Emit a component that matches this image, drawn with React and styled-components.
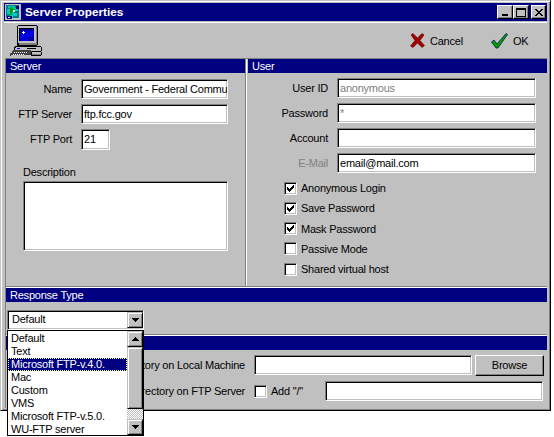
import React from 'react';
import styled, { createGlobalStyle } from 'styled-components';

const GlobalStyle = createGlobalStyle`
  html, body {
    margin: 0;
    padding: 0;
    background: #fff;
  }
  body {
    font-family: "Liberation Sans", Arial, sans-serif;
    font-size: 11px;
    letter-spacing: -0.22px;
    color: #000;
  }
`;

const Page = styled.div`
  width: 554px;
  height: 437px;
  overflow: hidden;
  position: relative;
`;

const Window = styled.div`
  width: 551px;
  height: 411px;
  box-sizing: border-box;
  background: #c0c0c0;
  border: 1px solid;
  border-color: #c0c0c0 #000 #000 #c0c0c0;
  box-shadow: inset 1px 1px #fff, inset -1px -1px #808080;
  padding: 2px 3px 2px 3px;
  display: flex;
  flex-direction: column;
`;

const TitleBar = styled.div`
  height: 18px;
  flex: none;
  background: #000080;
  display: flex;
  align-items: center;
  padding: 0 1px 0 1px;
  color: #fff;
`;

const TitleText = styled.span`
  font-weight: bold;
  font-size: 11.8px;
  letter-spacing: 0;
  margin-left: 4px;
  flex: 1;
`;

const CaptionButton = styled.div`
  width: ${p => p.$width || 16}px;
  height: 14px;
  margin-left: ${p => p.$gap || 0}px;
  background: #c0c0c0;
  box-sizing: border-box;
  border: 1px solid;
  border-color: #fff #000 #000 #fff;
  box-shadow: inset -1px -1px #808080;
  display: flex;
  align-items: center;
  justify-content: center;
`;

const Toolbar = styled.div`
  height: 36px;
  flex: none;
  border-top: 1px solid #fff;
  margin-top: 1px;
  box-sizing: border-box;
  display: flex;
  align-items: center;
  padding: 0 0 0 6px;
`;

const ToolButton = styled.div`
  display: flex;
  align-items: center;
  gap: 5px;
  margin-left: ${p => p.$left}px;
`;

const Sections = styled.div`
  flex: 1;
  display: flex;
  flex-direction: column;
  border-left: 1px solid #808080;
  margin-left: 1px;
  min-height: 0;
`;

const SplitRow = styled.div`
  display: grid;
  grid-template-columns: 239px 1fr;
  height: 227px;
  flex: none;
  border-top: 1px solid #808080;
`;

const Column = styled.div`
  border-left: ${p => (p.$divided ? '1px solid #808080' : 'none')};
  box-shadow: ${p => (p.$divided ? 'inset 1px 0 #fff' : 'none')};
  padding-left: ${p => (p.$divided ? 2 : 0)}px;
`;

const Header = styled.div`
  height: 14px;
  line-height: 14px;
  background: #000080;
  color: #fff;
  padding-left: 4px;
`;

const Fields = styled.div`
  display: flex;
  flex-direction: column;
  gap: 5px;
  padding-top: ${p => p.$top}px;
`;

const Row = styled.div`
  display: flex;
  align-items: center;
  height: 20px;
`;

const Label = styled.label`
  width: ${p => p.$width}px;
  flex: none;
  text-align: right;
  margin-right: 9px;
  white-space: nowrap;
  color: ${p => (p.$disabled ? '#808080' : '#000')};
`;

const Sunken = styled.div`
  box-sizing: border-box;
  flex: none;
  width: ${p => p.$width}px;
  height: ${p => p.$height || 20}px;
  background: #fff;
  border: 1px solid;
  border-color: #808080 #fff #fff #808080;
  box-shadow: inset 1px 1px #000, inset -1px -1px #c0c0c0;
  padding: 2px;
  line-height: 15px;
  white-space: nowrap;
  overflow: hidden;
  color: ${p => (p.$muted ? '#808080' : '#000')};
`;

const Description = styled.div`
  padding: 16px 0 0 17px;
`;

const DescriptionLabel = styled.div`
  height: 16px;
  line-height: 14px;
`;

const Checks = styled.div`
  display: flex;
  flex-direction: column;
  padding: 5px 0 0 36px;
`;

const CheckRow = styled.div`
  display: flex;
  align-items: center;
  height: 20.25px;
  gap: 4px;
`;

const Box = styled.div`
  box-sizing: border-box;
  width: 13px;
  height: 13px;
  flex: none;
  background: #fff;
  border: 1px solid;
  border-color: #808080 #fff #fff #808080;
  box-shadow: inset 1px 1px #000, inset -1px -1px #c0c0c0;
  display: flex;
  align-items: center;
  justify-content: center;
`;

const Section = styled.div`
  border-top: 1px solid #808080;
  box-shadow: inset 0 1px #fff;
  padding-top: 1px;
  flex: none;
`;

const ResponseBody = styled.div`
  height: 32px;
`;

const PathRows = styled.div`
  display: flex;
  flex-direction: column;
  gap: 6px;
  padding-top: 5px;
`;

const PathRow = styled.div`
  display: flex;
  align-items: center;
  height: 20px;
`;

const PathLabel = styled.span`
  width: 239px;
  flex: none;
  text-align: right;
  margin-right: 9px;
  white-space: nowrap;
`;

const AddSlash = styled.div`
  display: flex;
  align-items: center;
  gap: 4px;
  width: 71px;
  flex: none;
`;

const BrowseButton = styled.div`
  box-sizing: border-box;
  width: 69px;
  height: 21px;
  margin-left: 3px;
  flex: none;
  border: 1px solid;
  border-color: #fff #000 #000 #fff;
  box-shadow: inset -1px -1px #808080;
  text-align: center;
  line-height: 18px;
`;

/* the open combo lies over the sections below it */
const Combo = styled.div`
  position: absolute;
  left: 7px;
  top: 310px;
  width: 137px;
`;

const ComboField = styled.div`
  box-sizing: border-box;
  height: 20px;
  background: #fff;
  border: 1px solid;
  border-color: #808080 #fff #fff #808080;
  box-shadow: inset 1px 1px #000, inset -1px -1px #c0c0c0;
  padding: 1px 0 0 4px;
  line-height: 15px;
  display: flex;
  justify-content: space-between;
`;

const ArrowButton = styled.div`
  box-sizing: border-box;
  width: 16px;
  height: 16px;
  background: #c0c0c0;
  border: 1px solid;
  border-color: #c0c0c0 #000 #000 #c0c0c0;
  box-shadow: inset 1px 1px #fff, inset -1px -1px #808080;
  display: flex;
  align-items: center;
  justify-content: center;
  flex: none;
`;

const DropList = styled.div`
  box-sizing: border-box;
  height: 106px;
  background: #fff;
  border: 1px solid #000;
  display: flex;
`;

const Options = styled.div`
  flex: 1;
  padding-top: 1px;
`;

const Option = styled.div`
  height: 13px;
  line-height: 13px;
  padding-left: 3px;
  white-space: nowrap;
  background: ${p => (p.$active ? '#000080' : 'transparent')};
  color: ${p => (p.$active ? '#fff' : '#000')};
  outline: ${p => (p.$active ? '1px dotted #ffff80' : 'none')};
  outline-offset: -1px;
`;

const ScrollBar = styled.div`
  width: 16px;
  flex: none;
  display: flex;
  flex-direction: column;
  background: repeating-conic-gradient(#c0c0c0 0 25%, #fff 0 50%) 0 0 / 2px 2px;
`;

const ScrollThumb = styled.div`
  box-sizing: border-box;
  height: 62px;
  flex: none;
  background: #c0c0c0;
  border: 1px solid;
  border-color: #c0c0c0 #000 #000 #c0c0c0;
  box-shadow: inset 1px 1px #fff, inset -1px -1px #808080;
  margin-bottom: auto;
`;

const Arrow = ({ up }) => (
  <svg width="7" height="4" viewBox="0 0 7 4" shapeRendering="crispEdges">
    <path d={up ? 'M3 0h1v1h1v1h1v1h1v1H0V3h1V2h1V1h1z' : 'M0 0h7v1H6v1H5v1H4v1H3V3H2V2H1V1H0z'} fill="#000" />
  </svg>
);

const Tick = () => (
  <svg width="9" height="9" viewBox="0 0 9 9" shapeRendering="crispEdges">
    <path d="M7 1h1v3H7v1H6v1H5v1H4v1H3V7H2V6H1V3h1v1h1v1h1V4h1V3h1V2h1z" fill="#000" />
  </svg>
);

const AppIcon = () => (
  <svg width="16" height="16" viewBox="0 0 16 16" shapeRendering="crispEdges">
    <rect x="0" y="0" width="16" height="16" fill="#c0c0c0" />
    <rect x="1" y="1" width="13" height="13" fill="#008080" />
    <path d="M3 2h7v2h3v3H9v2h3v3H8v2H5v-4H2V5h3V4H3z" fill="#00c8c8" />
    <path d="M5 3h3v2h2v3H7v3H5z" fill="#00a000" />
    <path d="M2 12h5v3H2zM11 2h3v3h-3z" fill="#000080" />
    <path d="M8 6h2v2H8zM3 13h2v1H3z" fill="#fff" />
  </svg>
);

const ComputerIcon = () => (
  <svg width="32" height="32" viewBox="0 0 32 32" shapeRendering="crispEdges">
    <path d="M8 0h19v1h1v19h-1v2H7V1h1z" fill="#000" />
    <path d="M8 1h18v17H8z" fill="#c0c0c0" />
    <path d="M26 1h1v19H9v-2h17z" fill="#808080" />
    <rect x="9" y="3" width="15" height="13" fill="#000" />
    <rect x="10" y="4" width="14" height="12" fill="#0000e0" />
    <path d="M10 4h14v2H13v3h-3zM18 12h6v4h-6z" fill="#0000a0" />
    <path d="M13 6h1v1h1v1h-1v1h-1V8h-1V7h1z" fill="#fff" />
    <path d="M5 21h26v1h1v4h-1v1H4v-5h1z" fill="#000" />
    <path d="M6 22h25v4H5v-3h1z" fill="#c0c0c0" />
    <path d="M7 23h3v1H7z" fill="#0000e0" />
    <path d="M17 23h9v1h-9z" fill="#000" />
    <path d="M3 25h18v1h1v3h-1v1H1v1H0v-3h2v-2h1z" fill="#404040" />
    <path d="M4 27h1v1H4zM6 27h1v1H6zM8 27h1v1H8zM10 27h1v1h-1zM12 27h1v1h-1zM14 27h1v1h-1zM16 27h1v1h-1zM3 29h1v1H3zM5 29h1v1H5zM7 29h1v1H7zM9 29h1v1H9zM11 29h1v1h-1zM13 29h1v1h-1z" fill="#fff" />
    <path d="M22 26h9v1h1v3h-1v1H21v-4h1z" fill="#000" />
    <path d="M22 27h9v3h-9z" fill="#c0c0c0" />
    <path d="M22 29h9v1h-9z" fill="#808080" />
  </svg>
);

const CrossIcon = () => (
  <svg width="15" height="15" viewBox="0 0 15 15">
    <path d="M1 2 L3 0.5 L7.5 5 L12 0.5 L14 2 L10 7.5 L14.5 12.5 L12 14.5 L7.5 10 L3 14.5 L0.5 13 L5 7.5 Z" fill="#a00000" stroke="#600000" strokeWidth="0.6" />
  </svg>
);

const CheckIcon = () => (
  <svg width="17" height="16" viewBox="0 0 17 16">
    <path d="M0.5 9 L3 7 L6 11 L15 0.5 L16.5 1.5 L7 15 L5 15 Z" fill="#00a000" stroke="#000060" strokeWidth="0.7" />
  </svg>
);

const options = ['Default', 'Text', 'Microsoft FTP-v.4.0.', 'Mac', 'Custom', 'VMS', 'Microsoft FTP-v.5.0.', 'WU-FTP server'];

const checks = [
  { text: 'Anonymous Login', on: true },
  { text: 'Save Password', on: true },
  { text: 'Mask Password', on: true },
  { text: 'Passive Mode', on: false },
  { text: 'Shared virtual host', on: false },
];

export default function App() {
  return (
    <Page>
      <GlobalStyle />
      <Window>
        <TitleBar>
          <AppIcon />
          <TitleText>Server Properties</TitleText>
          <CaptionButton>
            <svg width="8" height="8" viewBox="0 0 8 8" shapeRendering="crispEdges"><rect x="1" y="6" width="6" height="2" fill="#000" /></svg>
          </CaptionButton>
          <CaptionButton>
            <svg width="10" height="9" viewBox="0 0 10 9" shapeRendering="crispEdges"><path d="M0 0h10v9H0z M1 2v6h8V2z" fillRule="evenodd" fill="#000" /></svg>
          </CaptionButton>
          <CaptionButton $gap={2} $width={15}>
            <svg width="8" height="7" viewBox="0 0 8 7" shapeRendering="crispEdges"><path d="M0 0h2v1h1v1h2V1h1V0h2v1H7v1H6v1H5v1h1v1h1v1h1v1H6V6H5V5H3v1H2v1H0V6h1V5h1V4h1V3H2V2H1V1H0z" fill="#000" /></svg>
          </CaptionButton>
        </TitleBar>
        <Toolbar>
          <ComputerIcon />
          <ToolButton $left={368}><CrossIcon />Cancel</ToolButton>
          <ToolButton $left={28}><CheckIcon />OK</ToolButton>
        </Toolbar>
        <Sections>
          <SplitRow>
            <Column>
              <Header>Server</Header>
              <Fields $top={6}>
                <Row><Label $width={66}>Name</Label><Sunken $width={147}>Government - Federal Commu</Sunken></Row>
                <Row><Label $width={66}>FTP Server</Label><Sunken $width={147}>ftp.fcc.gov</Sunken></Row>
                <Row><Label $width={66}>FTP Port</Label><Sunken $width={29} $height={21}>21</Sunken></Row>
              </Fields>
              <Description>
                <DescriptionLabel>Description</DescriptionLabel>
                <Sunken $width={205} $height={70} />
              </Description>
            </Column>
            <Column $divided>
              <Header>User</Header>
              <Fields $top={5}>
                <Row><Label $width={80}>User ID</Label><Sunken $width={199} $muted>anonymous</Sunken></Row>
                <Row><Label $width={80}>Password</Label><Sunken $width={199} $muted>*</Sunken></Row>
                <Row><Label $width={80}>Account</Label><Sunken $width={199} /></Row>
                <Row><Label $width={80} $disabled>E-Mail</Label><Sunken $width={199}>email@mail.com</Sunken></Row>
              </Fields>
              <Checks>
                {checks.map(c => (
                  <CheckRow key={c.text}>
                    <Box>{c.on && <Tick />}</Box>
                    {c.text}
                  </CheckRow>
                ))}
              </Checks>
            </Column>
          </SplitRow>
          <Section>
            <Header>Response Type</Header>
            <ResponseBody />
          </Section>
          <Section>
            <Header />
            <PathRows>
              <PathRow>
                <PathLabel>Directory on Local Machine</PathLabel>
                <Sunken $width={218} />
                <BrowseButton>Browse</BrowseButton>
              </PathRow>
              <PathRow>
                <PathLabel>Directory on FTP Server</PathLabel>
                <AddSlash><Box />Add "/"</AddSlash>
                <Sunken $width={218} />
              </PathRow>
            </PathRows>
          </Section>
        </Sections>
      </Window>
      <Combo>
        <ComboField>
          Default
          <ArrowButton><Arrow /></ArrowButton>
        </ComboField>
        <DropList>
          <Options>
            {options.map(o => (
              <Option key={o} $active={o === 'Microsoft FTP-v.4.0.'}>{o}</Option>
            ))}
          </Options>
          <ScrollBar>
            <ArrowButton><Arrow up /></ArrowButton>
            <ScrollThumb />
            <ArrowButton><Arrow /></ArrowButton>
          </ScrollBar>
        </DropList>
      </Combo>
    </Page>
  );
}
